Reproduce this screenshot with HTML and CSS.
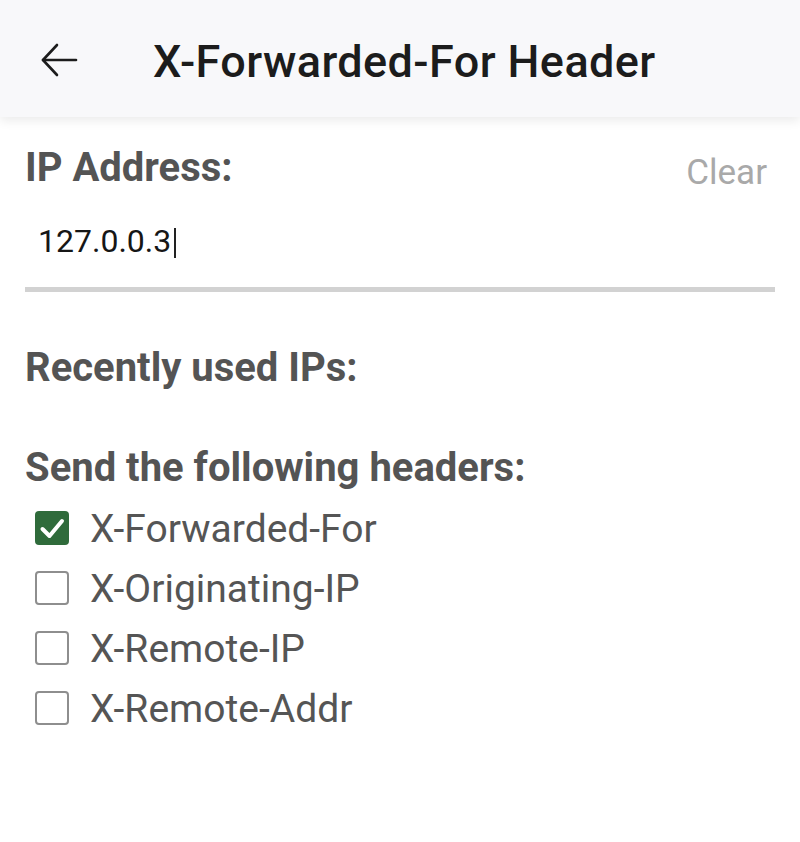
FILE: index.html
```html
<!DOCTYPE html>
<html lang="en">
<head>
  <meta charset="UTF-8">
  <title>X-Forwarded-For Header</title>
  <meta name="viewport" content="width=device-width, initial-scale=1.0">
  <link rel="stylesheet" href="styles.css">
</head>
<body>

  <!-- Kopfzeile -->
  <header class="top-bar">
    <span class="back-button">
      <svg width="38" height="34" viewBox="0 0 38 34" fill="none" stroke="#1c1c1c" stroke-width="2.6" stroke-linecap="round" stroke-linejoin="round">
        <path d="M36 17H3"/>
        <path d="M17 2L3 17L17 32"/>
      </svg>
    </span>
    <h1>X-Forwarded-For Header</h1>
  </header>

  <main class="content">
    <!-- IP-Eingabe -->
    <div class="label-row">
      <span class="label">IP Address:</span>
      <span class="clear-link">Clear</span>
    </div>
    <div class="ip-input">127.0.0.3<span class="caret"></span></div>

    <div class="label section">Recently used IPs:</div>

    <div class="label section">Send the following headers:</div>

    <!-- Header-Auswahl -->
    <ul class="header-list">
      <li class="checked"><span class="box">
        <svg width="34" height="34" viewBox="0 0 34 34" fill="none" stroke="#fff" stroke-width="4" stroke-linecap="round" stroke-linejoin="round"><path d="M7.5 18L14.5 25L27 10"/></svg>
      </span>X-Forwarded-For</li>
      <li><span class="box"></span>X-Originating-IP</li>
      <li><span class="box"></span>X-Remote-IP</li>
      <li><span class="box"></span>X-Remote-Addr</li>
    </ul>
  </main>

</body>
</html>
```

FILE: styles.css
```css
/* Grundlayout */
body {
  margin: 0;
  padding: 0;
  background: #fff;
  font-family: Roboto, "Noto Sans", sans-serif;
  overflow-x: hidden;
}

/* Kopfzeile */
.top-bar {
  box-sizing: border-box;
  height: 117px;
  padding-top: 6px;
  display: flex;
  align-items: center;
  background: #f8f8fa;
  box-shadow: 0 4px 10px rgba(0,0,0,0.08);
}
.back-button {
  display: flex;
  margin-left: 40px;
  margin-right: 75px;
  margin-top: -4px;
}
.top-bar h1 {
  margin: 0;
  font-size: 45px;
  font-weight: 500;
  letter-spacing: 0.4px;
  color: #1c1c1c;
}

/* Inhalt */
.content {
  padding: 27px 25px 0 25px;
}
.label {
  font-size: 40px;
  line-height: 48px;
  font-weight: bold;
  color: #545454;
}
.label-row {
  display: flex;
  justify-content: space-between;
  align-items: flex-start;
}
.clear-link {
  font-size: 35px;
  line-height: 36px;
  margin-top: 11px;
  margin-right: 8px;
  color: #a9a9a9;
}
.ip-input {
  margin-top: 29px;
  padding: 0 0 26px 13px;
  font-size: 32px;
  line-height: 40px;
  color: #161616;
  border-bottom: 5px solid #d2d2d2;
}
.caret {
  display: inline-block;
  width: 2px;
  height: 30px;
  margin-left: 3px;
  vertical-align: -6px;
  background: #222;
}
.section {
  margin-top: 52px;
}

/* Header-Liste */
.header-list {
  list-style: none;
  margin: 7px 0 0 0;
  padding: 0;
}
.header-list li {
  display: flex;
  align-items: center;
  height: 60px;
  font-size: 39px;
  color: #555;
}
.box {
  box-sizing: border-box;
  width: 34px;
  height: 34px;
  margin: -3px 21px 0 10px;
  border: 2.5px solid #8e8e8e;
  border-radius: 4px;
  display: flex;
  align-items: center;
  justify-content: center;
}
.checked .box {
  background: #2f6b3b;
  border: none;
}
```
